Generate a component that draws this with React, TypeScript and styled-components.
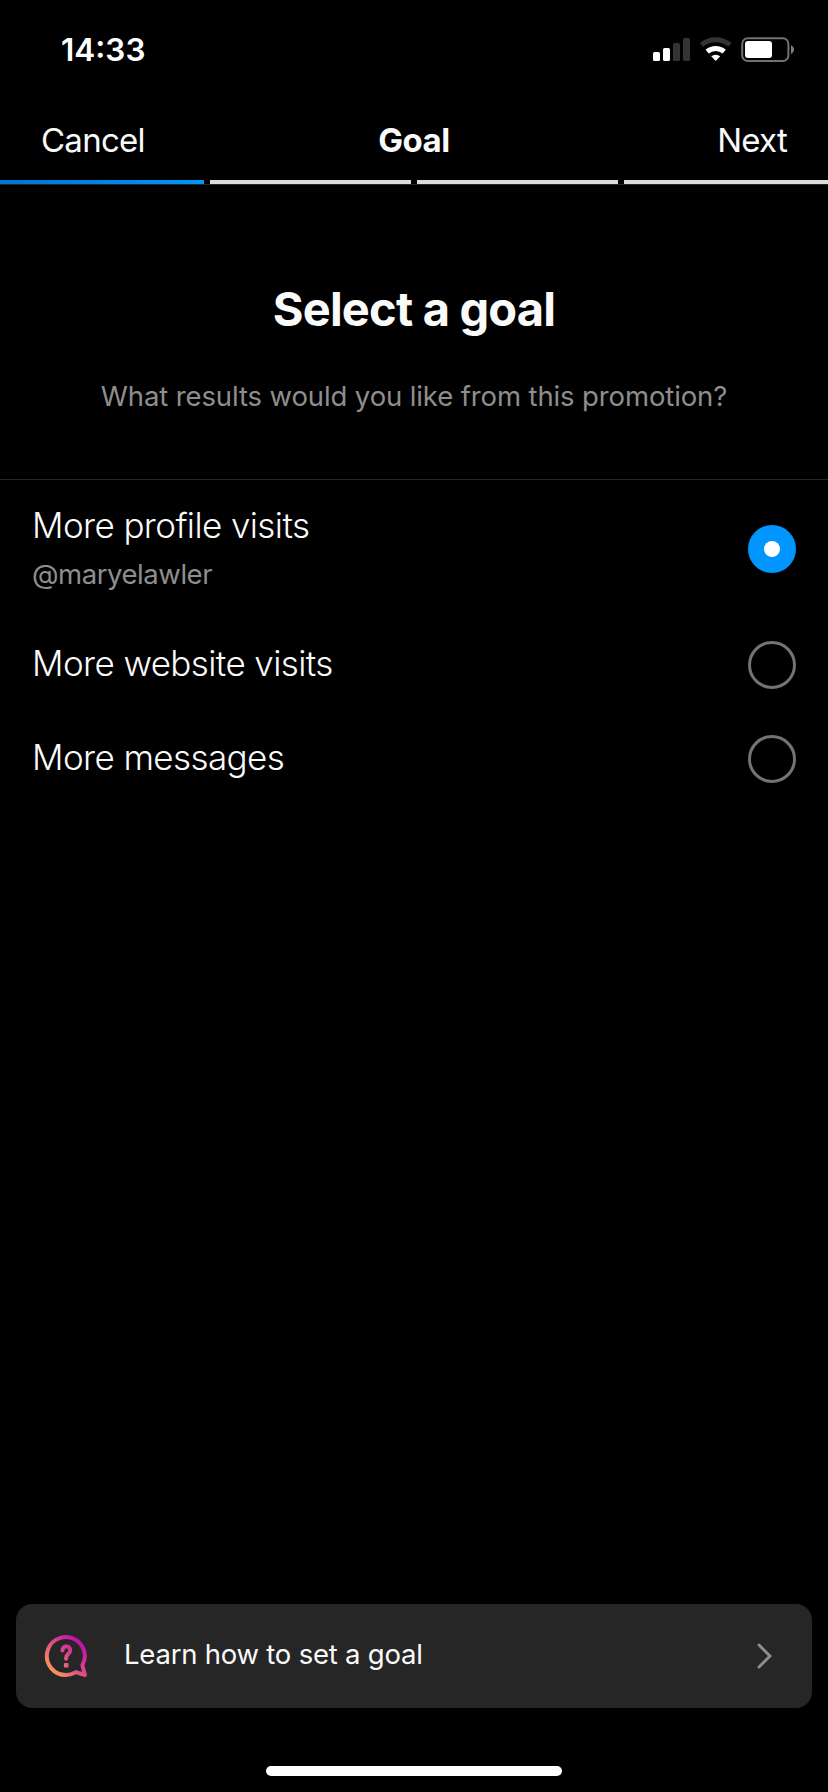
import React, { useState } from "react";
import styled, { createGlobalStyle } from "styled-components";

const GlobalStyle = createGlobalStyle`
  *, *::before, *::after { box-sizing: border-box; }
  html, body { margin: 0; background: #000; }
  body {
    font-family: Inter, "Liberation Sans", sans-serif;
    color: #fafafa;
    -webkit-font-smoothing: antialiased;
  }
  button { font: inherit; color: inherit; background: none; border: 0; padding: 0; margin: 0; text-align: left; }
`;

const Screen = styled.div`
  width: 828px;
  height: 1792px;
  display: flex;
  flex-direction: column;
  background: #000;
  overflow: hidden;
`;

const StatusBar = styled.header`
  height: 96px;
  flex: none;
  display: flex;
  justify-content: space-between;
  align-items: flex-start;
  padding: 30px 34px 0 61px;
`;

const Clock = styled.time`
  font-size: 31.5px;
  line-height: 40px;
  font-weight: 600;
  letter-spacing: 0;
  color: #fff;
`;

const StatusIcons = styled.svg`
  display: block;
  margin-top: 6px;
`;

const NavBar = styled.nav`
  height: 84px;
  flex: none;
  display: grid;
  grid-template-columns: 1fr auto 1fr;
  align-items: start;
  padding: 24px 41px 0;
  font-size: 33px;
  line-height: 40px;
`;

const NavAction = styled.button<{ $end?: boolean }>`
  justify-self: ${(p) => (p.$end ? "end" : "start")};
  font-weight: 400;
  letter-spacing: -0.75px;
`;

const NavTitle = styled.h1`
  margin: 0;
  font-size: 33px;
  font-weight: 700;
  letter-spacing: -0.5px;
`;

const Progress = styled.div`
  display: flex;
  gap: 6px;
  flex: none;
  height: 5px;
  border-bottom: 1px solid #262626;
`;

const Step = styled.div<{ $active?: boolean; $width: number }>`
  width: ${(p) => p.$width}px;
  height: 4px;
  background: ${(p) => (p.$active ? "linear-gradient(90deg, #0074d4, #0095ff)" : "#dbdbdb")};
`;

const Intro = styled.section`
  height: 295px;
  flex: none;
  display: flex;
  flex-direction: column;
  align-items: center;
  padding-top: 94px;
  border-bottom: 1px solid #262626;
`;

const Heading = styled.h2`
  margin: 0;
  font-size: 47px;
  line-height: 60px;
  font-weight: 700;
  letter-spacing: -0.8px;
`;

const Prompt = styled.p`
  margin: 37px 0 0;
  font-size: 27.5px;
  line-height: 40px;
  letter-spacing: -0.12px;
  color: #8e8e8e;
`;

const Options = styled.div`
  display: flex;
  flex-direction: column;
`;

const Option = styled.button<{ $tall?: boolean }>`
  height: ${(p) => (p.$tall ? 138 : 94)}px;
  display: flex;
  align-items: center;
  justify-content: space-between;
  padding: 0 32px;
`;

const OptionText = styled.span<{ $tall?: boolean }>`
  display: flex;
  flex-direction: column;
  gap: 5px;
  padding-bottom: ${(p) => (p.$tall ? 0 : 4)}px;
`;

const OptionLabel = styled.span`
  font-size: 35px;
  line-height: 44px;
  font-weight: 300;
  letter-spacing: -0.6px;
`;

const OptionDetail = styled.span`
  font-size: 27.5px;
  line-height: 44px;
  letter-spacing: -0.45px;
  color: #8e8e8e;
`;

const Radio = styled.span<{ $checked: boolean }>`
  width: 48px;
  height: 48px;
  flex: none;
  display: grid;
  place-items: center;
  border-radius: 50%;
  border: ${(p) => (p.$checked ? "0" : "3px solid #737373")};
  background: ${(p) => (p.$checked ? "#0095ff" : "transparent")};

  &::after {
    content: "";
    width: 16px;
    height: 16px;
    border-radius: 50%;
    background: ${(p) => (p.$checked ? "#fff" : "transparent")};
  }
`;

const HelpCard = styled.button`
  height: 104px;
  flex: none;
  margin: auto 16px 0;
  display: flex;
  align-items: center;
  padding: 0 40px 0 28px;
  border-radius: 16px;
  background: #262626;
`;

const HelpText = styled.span`
  flex: 1;
  margin-left: 36px;
  padding-bottom: 4px;
  font-size: 27.5px;
  line-height: 40px;
  letter-spacing: -0.22px;
`;

const HomeArea = styled.footer`
  height: 84px;
  flex: none;
  display: flex;
  justify-content: center;
  align-items: flex-end;
  padding-bottom: 16px;
`;

const HomeIndicator = styled.div`
  width: 296px;
  height: 10px;
  border-radius: 5px;
  background: #fff;
`;

function StatusGlyphs() {
  return (
    <StatusIcons width="142" height="27" viewBox="0 0 142 27">
      <g fill="#fff">
        <rect x="1" y="16" width="7" height="9" rx="1.6" />
        <rect x="11" y="12" width="7" height="13" rx="1.6" />
      </g>
      <g fill="#333">
        <rect x="21" y="7" width="7" height="18" rx="1.6" />
        <rect x="31" y="2" width="7" height="23" rx="1.6" />
      </g>
      <g fill="none" strokeWidth="5">
        <path d="M49.5 8.9a22.2 22.2 0 0 1 28.4 0" stroke="#333" />
        <path d="M55.2 15.6a13 13 0 0 1 17 0" stroke="#fff" />
      </g>
      <path d="M59.2 20.3a7 7 0 0 1 9 0L63.7 25z" fill="#fff" />
      <rect x="90.2" y="2.2" width="46.2" height="22.8" rx="5.6" fill="none" stroke="#727272" strokeWidth="2" />
      <rect x="93" y="5" width="27" height="17" rx="3" fill="#fff" />
      <path d="M139 9.2c4 1.8 4 7 0 8.8z" fill="#808080" />
    </StatusIcons>
  );
}

function HelpIcon() {
  return (
    <svg width="44" height="44" viewBox="0 0 44 44">
      <defs>
        <linearGradient id="helpGradient" gradientUnits="userSpaceOnUse" x1="6" y1="38" x2="36" y2="8">
          <stop offset="0" stopColor="#ff9b57" />
          <stop offset="0.5" stopColor="#de4f84" />
          <stop offset="1" stopColor="#c40fb0" />
        </linearGradient>
      </defs>
      <g fill="none" stroke="url(#helpGradient)" strokeWidth="4" strokeLinecap="round" strokeLinejoin="round">
        <path d="M31.8 38.1 41 41l-2.6-9.7A19 19 0 1 0 22 41c3.6 0 6.9-1.1 9.8-2.9z" />
        <path d="M18.5 16.6v-.4a3.9 3.9 0 0 1 7.8 0c0 3.2-4.2 4-4.2 7.6v1" />
      </g>
      <rect x="19.9" y="29" width="4.6" height="4.6" rx="0.8" fill="url(#helpGradient)" />
    </svg>
  );
}

function Chevron() {
  return (
    <svg width="16" height="28" viewBox="0 0 16 28" fill="none" stroke="#8e8e8e" strokeWidth="3" strokeLinecap="round">
      <path d="M3 3l11 11L3 25" />
    </svg>
  );
}

const goals = [
  { id: "profile", label: "More profile visits", detail: "@maryelawler" },
  { id: "website", label: "More website visits" },
  { id: "messages", label: "More messages" },
];

export default function App() {
  const [selected, setSelected] = useState("profile");
  return (
    <Screen>
      <GlobalStyle />
      <StatusBar>
        <Clock>14:33</Clock>
        <StatusGlyphs />
      </StatusBar>
      <NavBar>
        <NavAction>Cancel</NavAction>
        <NavTitle>Goal</NavTitle>
        <NavAction $end>Next</NavAction>
      </NavBar>
      <Progress>
        <Step $active $width={204} />
        <Step $width={201} />
        <Step $width={201} />
        <Step $width={204} />
      </Progress>
      <Intro>
        <Heading>Select a goal</Heading>
        <Prompt>What results would you like from this promotion?</Prompt>
      </Intro>
      <Options role="radiogroup">
        {goals.map((g) => (
          <Option
            key={g.id}
            role="radio"
            aria-checked={selected === g.id}
            $tall={!!g.detail}
            onClick={() => setSelected(g.id)}
          >
            <OptionText $tall={!!g.detail}>
              <OptionLabel>{g.label}</OptionLabel>
              {g.detail && <OptionDetail>{g.detail}</OptionDetail>}
            </OptionText>
            <Radio $checked={selected === g.id} />
          </Option>
        ))}
      </Options>
      <HelpCard>
        <HelpIcon />
        <HelpText>Learn how to set a goal</HelpText>
        <Chevron />
      </HelpCard>
      <HomeArea>
        <HomeIndicator />
      </HomeArea>
    </Screen>
  );
}
